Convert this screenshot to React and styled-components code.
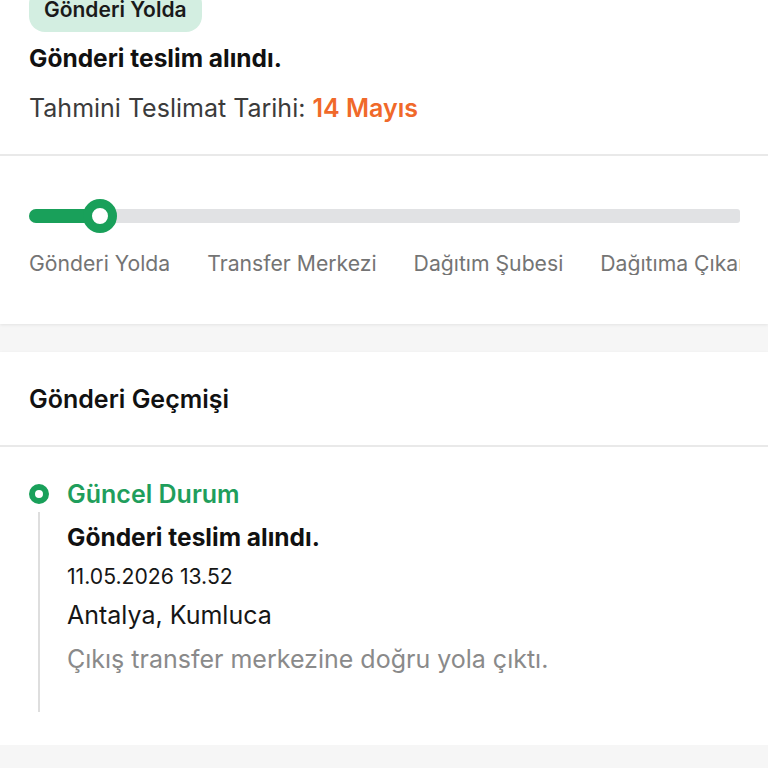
import styled, { createGlobalStyle } from "styled-components";

const GlobalStyle = createGlobalStyle`
  body {
    margin: 0;
    background: #f6f6f6;
    font-family: Inter, "Noto Sans", sans-serif;
    color: #111;
    overflow: hidden;
  }
`;

const Page = styled.div`
  display: flex;
  flex-direction: column;
  gap: 28px;
`;

const Card = styled.section`
  background: #fff;
  box-shadow: 0 1px 3px rgba(0, 0, 0, 0.08);
`;

const Summary = styled.div`
  padding: 0 29px 32px;
`;

const Badge = styled.div`
  display: inline-block;
  margin-top: -12px;
  height: 44px;
  line-height: 44px;
  padding: 0 15px;
  border-radius: 16px;
  background: #d3eee1;
  font-size: 21px;
  font-weight: 600;
  color: #1a1a1a;
`;

const Title = styled.div`
  margin-top: ${p => p.$top || 12}px;
  font-size: 24.5px;
  line-height: 28px;
  font-weight: 700;
  color: #111;
`;

const Estimate = styled.div`
  margin-top: 22px;
  font-size: 25px;
  line-height: 28px;
  color: #3b3b3b;
  span {
    color: #f0692a;
    font-weight: 600;
  }
`;

const Divider = styled.div`
  height: 2px;
  background: #e9e9e9;
`;

const Progress = styled.div`
  padding: 53px 28px 49px 29px;
`;

const Track = styled.div`
  position: relative;
  height: 14px;
  border-radius: 7px 3px 3px 7px;
  background: #e1e2e4;
`;

const Fill = styled.div`
  height: 100%;
  border-radius: 7px;
  background: #19a05a;
`;

const Knob = styled.div`
  position: absolute;
  top: -10px;
  width: 34px;
  height: 34px;
  box-sizing: border-box;
  border-radius: 50%;
  border: 9px solid #19a05a;
  background: #fff;
`;

const Steps = styled.div`
  display: flex;
  gap: 37px;
  margin-top: 28px;
  overflow: hidden;
  white-space: nowrap;
`;

const Step = styled.span`
  flex: none;
  font-size: 21.2px;
  line-height: 24px;
  color: #747474;
`;

const Heading = styled.h2`
  margin: 0;
  padding: 33px 29px 32px;
  font-size: 25px;
  line-height: 28px;
  font-weight: 600;
  color: #111;
`;

const Timeline = styled.div`
  padding: 33px 29px 33px;
`;

const Item = styled.div`
  display: grid;
  grid-template-columns: 20px 1fr;
  column-gap: 18px;
`;

const Marker = styled.div`
  display: flex;
  flex-direction: column;
  align-items: center;
`;

const Dot = styled.div`
  margin-top: 4px;
  width: 20px;
  height: 20px;
  box-sizing: border-box;
  border-radius: 50%;
  border: 6px solid #19a05a;
  background: #fff;
`;

const Line = styled.div`
  flex: 1;
  width: 2px;
  margin-top: 8px;
  background: #dedede;
`;

const Body = styled.div`
  padding-bottom: 39px;
`;

const Status = styled.div`
  font-size: 25px;
  line-height: 28px;
  font-weight: 600;
  color: #1f9e5c;
`;

const Meta = styled.div`
  margin-top: ${p => p.$top}px;
  font-size: ${p => p.$size}px;
  line-height: ${p => p.$lh}px;
  color: ${p => p.$color || "#161616"};
`;

const steps = ["Gönderi Yolda", "Transfer Merkezi", "Dağıtım Şubesi", "Dağıtıma Çıkarıldı"];

export default function App() {
  const progress = 71;
  return (
    <Page>
      <GlobalStyle />
      <Card>
        <Summary>
          <Badge>Gönderi Yolda</Badge>
          <Title>Gönderi teslim alındı.</Title>
          <Estimate>
            Tahmini Teslimat Tarihi: <span>14 Mayıs</span>
          </Estimate>
        </Summary>
        <Divider />
        <Progress>
          <Track>
            <Fill style={{ width: progress }} />
            <Knob style={{ left: progress - 17 }} />
          </Track>
          <Steps>
            {steps.map(s => (
              <Step key={s}>{s}</Step>
            ))}
          </Steps>
        </Progress>
      </Card>
      <Card>
        <Heading>Gönderi Geçmişi</Heading>
        <Divider />
        <Timeline>
          <Item>
            <Marker>
              <Dot />
              <Line />
            </Marker>
            <Body>
              <Status>Güncel Durum</Status>
              <Title $top={15}>Gönderi teslim alındı.</Title>
              <Meta $top={13} $size={21.2} $lh={24}>11.05.2026 13.52</Meta>
              <Meta $top={13} $size={25} $lh={28}>Antalya, Kumluca</Meta>
              <Meta $top={16} $size={25} $lh={28} $color="#8a8a8a">
                Çıkış transfer merkezine doğru yola çıktı.
              </Meta>
            </Body>
          </Item>
        </Timeline>
      </Card>
    </Page>
  );
}
